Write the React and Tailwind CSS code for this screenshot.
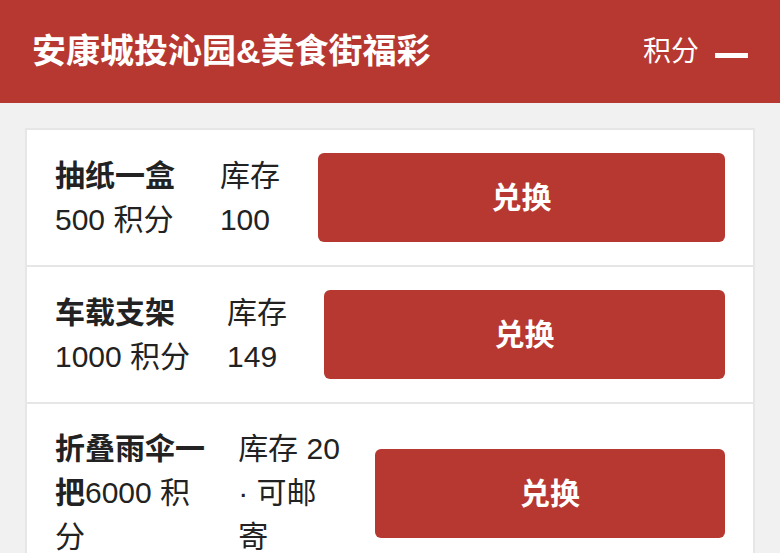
import React from 'react';

// Points-shop list: header bar + product rows with redeem buttons
const items = [
  { id: 1, name: '抽纸一盒', points: '500 积分', stock: '库存 100' },
  { id: 2, name: '车载支架', points: '1000 积分', stock: '库存 149' },
  { id: 3, name: '折叠雨伞一把', points: '6000 积分', stock: '库存 20 · 可邮寄' },
];

const fontStack = { fontFamily: '"Liberation Sans", "Noto Sans CJK SC", sans-serif' };

// name/points and stock shrink against the wide redeem button
const ItemRow = ({ item, last }) => (
  <div
    className={`flex items-center gap-8 px-[28px] py-[23px] ${
      last ? '' : 'border-b-2 border-[#e6e6e6]'
    }`}
  >
    <div className="text-[30px] leading-[44px] text-[#222]">
      <span className="font-bold">{item.name}</span>
      {item.points}
    </div>
    <div className="text-[30px] leading-[44px] text-[#222]">{item.stock}</div>
    <button className="w-[730px] h-[89px] rounded-[6px] bg-[#b73731] text-white text-[30px] font-bold">
      兑换
    </button>
  </div>
);

export default function App() {
  return (
    <div className="min-h-[553px] bg-[#f1f1f1]" style={fontStack}>
      <header className="flex h-[103px] items-center justify-between bg-[#b73731] px-[32px] text-white">
        <h1 className="text-[34px] font-bold">安康城投沁园&amp;美食街福彩</h1>
        <div className="flex items-center gap-[16px]">
          <span className="text-[28px]">积分</span>
          <span className="inline-block text-[33px] font-bold scale-y-150">—</span>
        </div>
      </header>
      <div className="mx-[25px] mt-[25px] border-2 border-[#e6e6e6] bg-white">
        {items.map((item, i) => (
          <ItemRow key={item.id} item={item} last={i === items.length - 1} />
        ))}
      </div>
    </div>
  );
}
